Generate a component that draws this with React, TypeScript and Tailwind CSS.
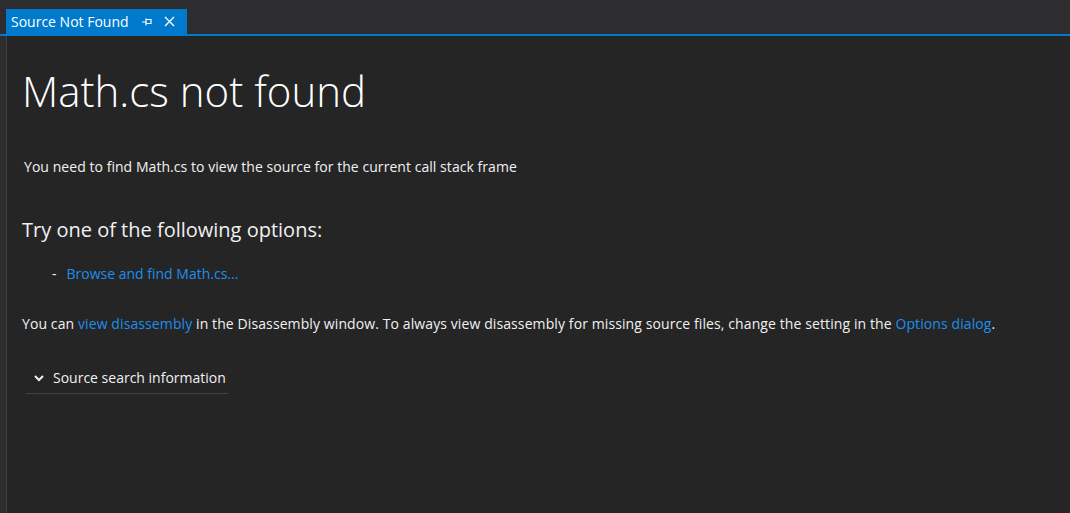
export default function App() {
  const link = "text-[#1d8fea]";
  return (
    <div
      className="w-[1070px] h-[513px] bg-[#2d2d30] flex flex-col overflow-hidden text-[#f1f1f1]"
      style={{ fontFamily: '"Segoe UI", "Open Sans", "Noto Sans", sans-serif' }}
    >
      {/* tab strip */}
      <div className="h-[34px] flex items-end pl-[6px] shrink-0">
        <div className="h-[25px] w-[181px] bg-[#007acc] flex items-center pl-[5px] pr-[8px] text-[14px] text-white">
          <span className="leading-none">Source Not Found</span>
          <svg width="12" height="12" viewBox="0 0 12 12" className="ml-[12px]" fill="none" stroke="#fff" strokeWidth="1.2">
            <path d="M1 6h4M5 2.5v7M5 3.5h5v4H5" />
          </svg>
          <svg width="11" height="11" viewBox="0 0 11 11" className="ml-[11px]" fill="none" stroke="#fff" strokeWidth="1.4">
            <path d="M1 1l9 9M10 1l-9 9" />
          </svg>
        </div>
      </div>
      <div className="h-[2px] bg-[#007acc] shrink-0" />

      {/* body */}
      <div className="flex flex-1">
        <div className="w-[6px] bg-[#2d2d30]" />
        <div className="w-px bg-[#3f3f46]" />
        <div className="flex-1 bg-[#252526] pl-[15px] pt-[29px]">
          <h1 className="text-[42px] font-light leading-[52px] text-white">Math.cs not found</h1>
          <p className="mt-[40px] ml-[2px] text-[14px] leading-[20px] tracking-[0.05px]">
            You need to find Math.cs to view the source for the current call stack frame
          </p>
          <h2 className="mt-[40px] text-[20px] leading-[26px]">Try one of the following options:</h2>
          <div className="mt-[21px] ml-[30px] text-[14px] leading-[20px] flex gap-[10px]">
            <span>-</span>
            <span className={link}>Browse and find Math.cs...</span>
          </div>
          <p className="mt-[30px] text-[14px] leading-[20px] tracking-[0.1px]">
            You can <span className={link}>view disassembly</span> in the Disassembly window. To always view
            disassembly for missing source files, change the setting in the{" "}
            <span className={link}>Options dialog</span>.
          </p>
          <div className="mt-[34px] ml-[4px] w-[202px] border-b border-[#3f3f46] pb-[5px] flex items-center text-[14px] leading-[20px]">
            <svg width="10" height="8" viewBox="0 0 10 8" className="ml-[8px] mr-[9px]" fill="none" stroke="#f1f1f1" strokeWidth="2">
              <path d="M1 2l4 4 4-4" />
            </svg>
            <span>Source search information</span>
          </div>
        </div>
      </div>
    </div>
  );
}
